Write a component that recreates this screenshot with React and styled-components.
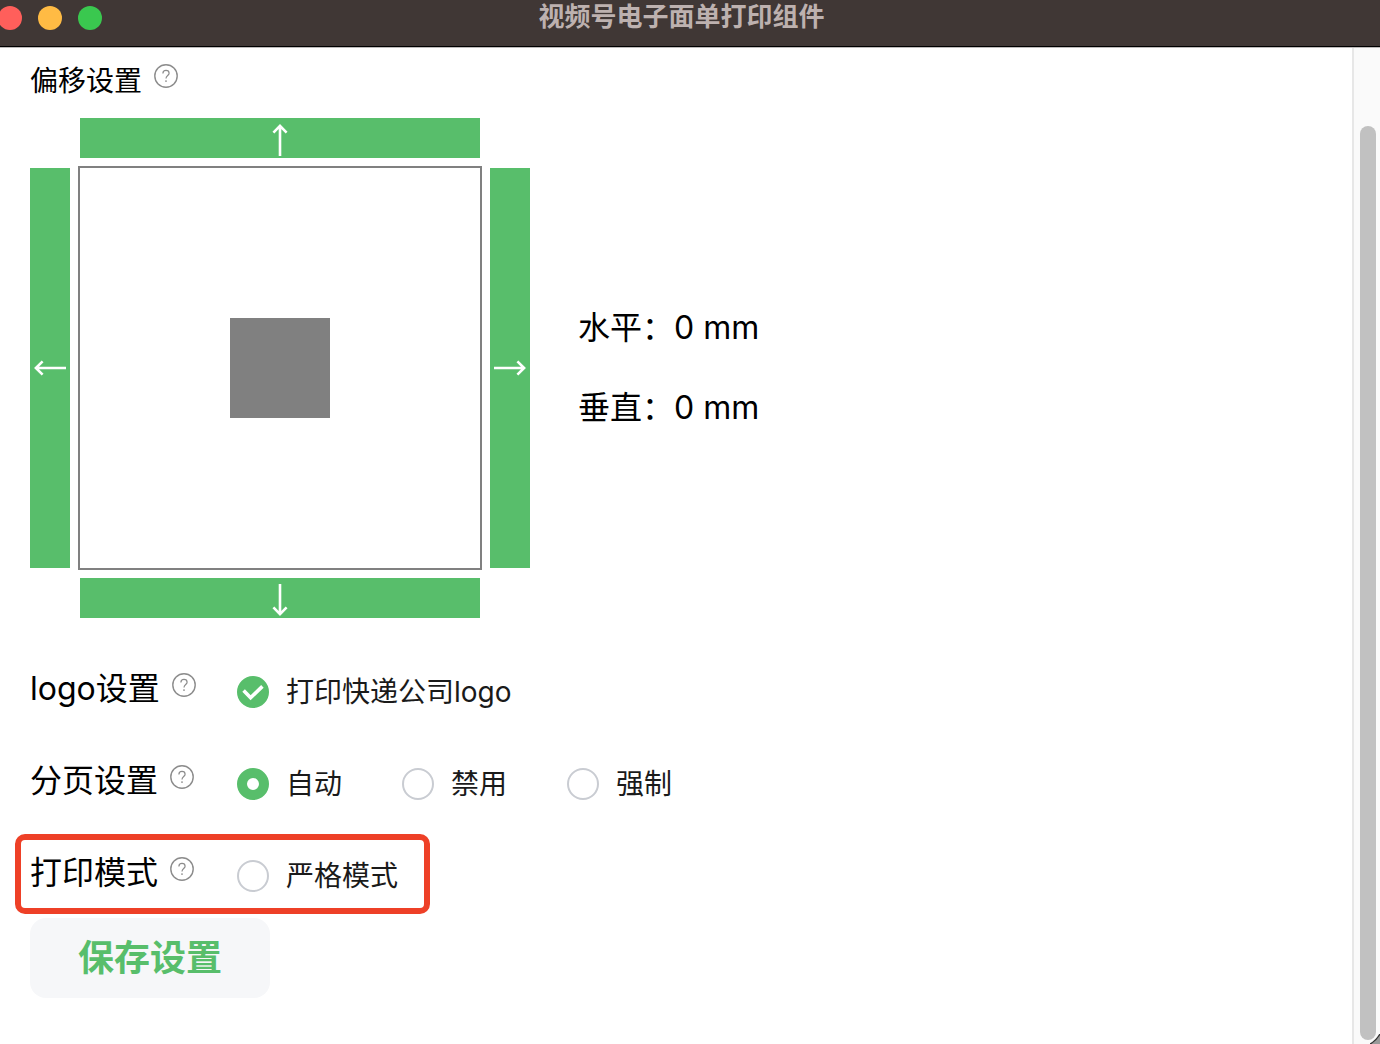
import React,{useState} from 'react';
import styled,{createGlobalStyle} from 'styled-components';

const ArrowIcon=({angle})=>(
    <svg width='40' height='40' viewBox='0 0 40 40' fill='none' stroke='#fff' strokeWidth='2.6' aria-hidden='true'>
        <path transform={`rotate(${angle} 20 20)`} d='M20 36V5.6M13.4 12.6L20 5.9L26.6 12.6'/>
    </svg>
);
const HelpTip=({label})=>(
    <HelpButton type='button' aria-label={label}>
        <svg width='24' height='24' viewBox='0 0 24 24' fill='none' stroke='#8c8c8c' aria-hidden='true'>
            <circle cx='12' cy='12' r='11.2' strokeWidth='1.4'/>
            <path d='M8.9 9.4C8.9 7.5 10.2 6.4 12 6.4S15.1 7.5 15.1 9.2C15.1 11.5 12 11.6 12 14.4' strokeWidth='1.2'/>
            <circle cx='12' cy='17.1' r='0.9' fill='#8c8c8c' stroke='none'/>
        </svg>
    </HelpButton>
);
const CheckOption=({text,checked,onChange})=>(
    <Option>
        <Mark>
            <CheckInput type='checkbox' checked={checked} onChange={onChange}/>
            {checked&&<svg width='32' height='32' viewBox='0 0 32 32' fill='none' stroke='#fff' strokeWidth='3.6' aria-hidden='true'>
                <path d='M6.6 14.6L13.6 21.8L25.4 10.4'/>
            </svg>}
        </Mark>
        {text}
    </Option>
);
const pageModes=['自动','禁用','强制'];

const App=()=>{
    const [offset,setOffset] = useState({x:0,y:0});
    const [logo,setLogo] = useState(true);
    const [pageMode,setPageMode] = useState('自动');
    const [strict,setStrict] = useState(false);
    const move=(dx,dy)=>setOffset({x:offset.x+dx,y:offset.y+dy});
    return(
        <>
            <GlobalStyle/>
            <Window>
                <TitleBar>
                    <Lights>
                        <Light $color='#ff5f5b' aria-label='关闭'/>
                        <Light $color='#ffbb44' aria-label='最小化'/>
                        <Light $color='#3ac84f' aria-label='缩放'/>
                    </Lights>
                    <Title>视频号电子面单打印组件</Title>
                </TitleBar>
                <Body>
                    <Content>
                        <Heading>偏移设置<HelpTip label='偏移设置说明'/></Heading>
                        <OffsetPanel>
                            <OffsetGrid>
                                <MoveButton $area='up' $vertical aria-label='上移' onClick={()=>move(0,-1)}><ArrowIcon angle={0}/></MoveButton>
                                <MoveButton $area='left' aria-label='左移' onClick={()=>move(-1,0)}><ArrowIcon angle={-90}/></MoveButton>
                                <Paper><Block/></Paper>
                                <MoveButton $area='right' aria-label='右移' onClick={()=>move(1,0)}><ArrowIcon angle={90}/></MoveButton>
                                <MoveButton $area='down' $vertical aria-label='下移' onClick={()=>move(0,1)}><ArrowIcon angle={180}/></MoveButton>
                            </OffsetGrid>
                            <OffsetValues>
                                <p>水平：{offset.x} mm</p>
                                <p>垂直：{offset.y} mm</p>
                            </OffsetValues>
                        </OffsetPanel>
                        <Settings>
                            <Row>
                                <RowLabel>logo设置<HelpTip label='logo设置说明'/></RowLabel>
                                <Options>
                                    <CheckOption text='打印快递公司logo' checked={logo} onChange={()=>setLogo(!logo)}/>
                                </Options>
                            </Row>
                            <Row>
                                <RowLabel>分页设置<HelpTip label='分页设置说明'/></RowLabel>
                                <Options>
                                    {pageModes.map((mode)=>(
                                        <Option key={mode}>
                                            <RadioInput type='radio' name='page-mode' checked={pageMode===mode} onChange={()=>setPageMode(mode)}/>
                                            {mode}
                                        </Option>
                                    ))}
                                </Options>
                            </Row>
                            <Row $highlight>
                                <RowLabel>打印模式<HelpTip label='打印模式说明'/></RowLabel>
                                <Options>
                                    <CheckOption text='严格模式' checked={strict} onChange={()=>setStrict(!strict)}/>
                                </Options>
                            </Row>
                        </Settings>
                        <SaveButton type='button'>保存设置</SaveButton>
                    </Content>
                    <ScrollTrack><ScrollThumb/></ScrollTrack>
                </Body>
                <Corner width='10' height='10' viewBox='0 0 10 10' aria-hidden='true'>
                    <path d='M0 10Q6 7 10 0V10Z' fill='#9a9a9a'/>
                    <path d='M0 10Q6 7 10 0' fill='none' stroke='#333' strokeWidth='1.4'/>
                </Corner>
            </Window>
        </>
    );
}
const GlobalStyle = createGlobalStyle`
    *{
        box-sizing:border-box;
        margin:0;
        padding:0;
    }
    body{
        background-color:#fff;
        color:#000;
        font-family:Inter,'Noto Sans CJK SC',sans-serif;
    }
    button,input{
        border:none;
        font:inherit;
        cursor:pointer;
    }
`;
const Window = styled.div`
    position:relative;
    display:flex;
    flex-direction:column;
    min-height:100vh;
    overflow:hidden;
`;
const TitleBar = styled.header`
    display:grid;
    grid-template-columns:1fr auto 1fr;
    align-items:start;
    height:48px;
    padding-right:17px;
    background-color:#403735;
    border-bottom:1px solid #bdbaba;
    box-shadow:inset 0 -1px #000;
`;
const Lights = styled.div`
    display:flex;
    gap:16px;
    margin-left:-2px;
    padding-top:6px;
`;
const Light = styled.button`
    width:24px;
    height:24px;
    border-radius:50%;
    background-color:${({$color})=>$color};
`;
const Title = styled.h1`
    font-size:26px;
    line-height:34px;
    font-weight:700;
    color:#bdb1af;
`;
const Body = styled.div`
    display:flex;
    flex:1;
`;
const Content = styled.main`
    flex:1;
    padding:0 30px 46px;
`;
const HelpButton = styled.button`
    display:flex;
    margin-bottom:6px;
    background:none;
`;
const Heading = styled.h2`
    display:flex;
    align-items:center;
    gap:12px;
    height:64px;
    margin-bottom:6px;
    padding-bottom:2px;
    font-size:28px;
    font-weight:400;
`;
const OffsetPanel = styled.section`
    display:flex;
    align-items:center;
    gap:48px;
`;
const OffsetGrid = styled.div`
    display:grid;
    grid-template:
        '. up .' 40px
        'left paper right' 400px
        '. down .' 40px / 40px 400px 40px;
    gap:10px;
`;
const MoveButton = styled.button`
    grid-area:${({$area})=>$area};
    display:flex;
    align-items:center;
    justify-content:center;
    padding-top:${({$vertical})=>$vertical?'4px':'0'};
    background-color:#58be6b;
    svg{
        flex-shrink:0;
    }
`;
const Paper = styled.div`
    grid-area:paper;
    display:grid;
    place-items:center;
    outline:2px solid #808080;
`;
const Block = styled.div`
    width:100px;
    height:100px;
    background-color:#808080;
`;
const OffsetValues = styled.div`
    font-size:32px;
    line-height:80px;
`;
const Settings = styled.section`
    display:flex;
    flex-direction:column;
    align-items:flex-start;
    gap:12px;
    margin:32px 0 4px -15px;
`;
const Row = styled.div`
    display:flex;
    align-items:center;
    height:80px;
    padding:0 26px 0 9px;
    border:6px solid ${({$highlight})=>$highlight?'#ee4027':'transparent'};
    border-radius:10px;
`;
const RowLabel = styled.h2`
    display:flex;
    align-items:center;
    gap:12px;
    width:207px;
    padding-bottom:8px;
    font-size:32px;
    font-weight:400;
    ${HelpButton}{
        margin-bottom:2px;
    }
`;
const Options = styled.div`
    display:flex;
    gap:60px;
    padding-top:4px;
`;
const Option = styled.label`
    display:flex;
    align-items:center;
    gap:17px;
    font-size:28px;
    line-height:40px;
    color:#1a1a1a;
    cursor:pointer;
`;
const Mark = styled.span`
    display:grid;
    > *{
        grid-area:1 / 1;
    }
    svg{
        pointer-events:none;
    }
`;
const CheckInput = styled.input`
    appearance:none;
    width:32px;
    height:32px;
    border:2px solid #c9ccd2;
    border-radius:50%;
    &:checked{
        border-color:#58be6b;
        background-color:#58be6b;
    }
`;
const RadioInput = styled(CheckInput)`
    &:checked{
        border:10px solid #58be6b;
        background-color:#fff;
    }
`;
const SaveButton = styled.button`
    width:240px;
    height:80px;
    padding-bottom:6px;
    border-radius:16px;
    background-color:#f6f7f9;
    color:#58be6b;
    font-size:36px;
    font-weight:700;
`;
const ScrollTrack = styled.div`
    display:flex;
    width:28px;
    padding:78px 4px 4px 6px;
    border-left:2px solid #e7e7e7;
    background-color:#fafafa;
`;
const ScrollThumb = styled.div`
    flex:1;
    border-radius:8px;
    background-color:#c1c1c1;
`;
const Corner = styled.svg`
    position:absolute;
    right:0;
    bottom:0;
`;
export default App;
